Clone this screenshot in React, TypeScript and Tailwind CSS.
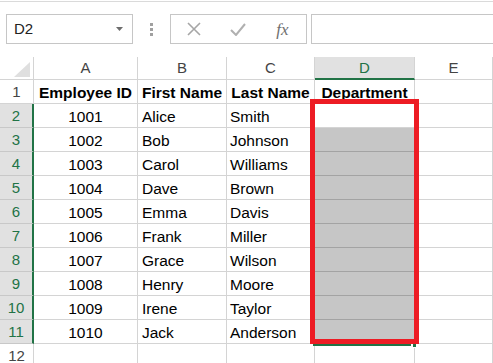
import React from "react";

const rows = [
  ["1001", "Alice", "Smith"],
  ["1002", "Bob", "Johnson"],
  ["1003", "Carol", "Williams"],
  ["1004", "Dave", "Brown"],
  ["1005", "Emma", "Davis"],
  ["1006", "Frank", "Miller"],
  ["1007", "Grace", "Wilson"],
  ["1008", "Henry", "Moore"],
  ["1009", "Irene", "Taylor"],
  ["1010", "Jack", "Anderson"],
];

const cell = "h-[24px] border-r border-b border-[#d4d4d4] flex items-center pt-[2px] overflow-hidden whitespace-nowrap";
const colHead = "h-[23px] border-r border-b border-[#d4d4d4] flex items-center justify-center text-[#444] text-[15px]";

const Toolbar: React.FC = () => (
  <div className="h-[56px] mt-px border-t border-[#dadada] flex items-start pt-[12px] pl-[6px]">
    {/* name box */}
    <div className="w-[127px] h-[30px] border border-[#c6c6c6] flex items-center justify-between pl-[7px] pr-[9px]">
      <span className="text-[15px] text-[#222] pt-px">D2</span>
      <svg width="7" height="4" viewBox="0 0 7 4">
        <path d="M0 0 H7 L3.5 4 Z" fill="#6d6d6d" />
      </svg>
    </div>
    <div className="w-[37px] h-[30px] flex flex-col items-center justify-center gap-[2px]">
      <span className="w-[3px] h-[3px] bg-[#a0a0a0]" />
      <span className="w-[3px] h-[3px] bg-[#a0a0a0]" />
      <span className="w-[3px] h-[3px] bg-[#a0a0a0]" />
    </div>
    {/* cancel / enter / fx */}
    <div className="w-[137px] h-[30px] border border-[#c6c6c6] flex items-center">
      <div className="w-[44px] flex justify-center pl-[2px]">
        <svg width="14" height="14" viewBox="0 0 14 14">
          <path d="M1 1 L13 13 M13 1 L1 13" stroke="#a6a6a6" strokeWidth="1.6" />
        </svg>
      </div>
      <div className="w-[46px] flex justify-center">
        <svg width="16" height="13" viewBox="0 0 16 13">
          <path d="M1 7 L6 12 L15 1" stroke="#b0b0b0" strokeWidth="2" fill="none" />
        </svg>
      </div>
      <div className="flex-1 flex justify-center pr-[2px]">
        <span className="font-['Liberation_Serif',serif] italic text-[17px] text-[#6f6f6f] leading-none">fx</span>
      </div>
    </div>
    <div className="flex-1 h-[30px] ml-[4px] border border-r-0 border-[#c6c6c6]" />
  </div>
);

export default function App() {
  return (
    <div className="w-[493px] h-[363px] overflow-hidden bg-white relative font-['Liberation_Sans',Arial,sans-serif] text-black">
      <Toolbar />
      <div className="grid grid-cols-[34px_104px_89px_88px_100px_1fr]">
        {/* header row */}
        <div className="h-[23px] border-r border-b border-[#d4d4d4] flex items-end justify-end pr-[3px] pb-[2px]">
          <svg width="16" height="15" viewBox="0 0 16 15">
            <path d="M16 0 L16 15 L0 15 Z" fill="#dfdfdf" />
          </svg>
        </div>
        <div className={colHead}>A</div>
        <div className={colHead}>B</div>
        <div className={colHead}>C</div>
        <div className="h-[23px] border-r border-[#d4d4d4] border-b-2 border-b-[#217346] bg-[#e1e1e1] flex items-center justify-center text-[#217346] text-[15px] pt-px">D</div>
        <div className={colHead}>E</div>

        {/* row 1 */}
        <div className={`${cell} justify-center text-[#444] text-[15px]`}>1</div>
        <div className={`${cell} justify-center font-bold text-[15.5px]`}>Employee ID</div>
        <div className={`${cell} justify-center font-bold text-[15.5px]`}>First Name</div>
        <div className={`${cell} justify-center font-bold text-[15.5px]`}>Last Name</div>
        <div className={`${cell} justify-center font-bold text-[15.5px]`}>Department</div>
        <div className={cell} />

        {rows.map(([id, first, last], i) => (
          <React.Fragment key={id}>
            <div className="h-[24px] border-b border-[#c8c8c8] border-r-2 border-r-[#217346] bg-[#e1e1e1] flex items-center justify-center pt-[2px] text-[#217346] text-[15px]">
              {i + 2}
            </div>
            <div className={`${cell} justify-center text-[15.5px]`}>{id}</div>
            <div className={`${cell} pl-[4px] text-[15.5px]`}>{first}</div>
            <div className={`${cell} pl-[3px] text-[15.5px]`}>{last}</div>
            <div
              className={
                i === 0
                  ? cell
                  : "h-[24px] border-r border-b border-r-[#d4d4d4] border-b-[#a3a3a3] bg-[#c6c6c6]"
              }
            />
            <div className={cell} />
          </React.Fragment>
        ))}

        {/* row 12 */}
        <div className={`${cell} justify-center text-[#444] text-[15px]`}>12</div>
        <div className={cell} />
        <div className={cell} />
        <div className={cell} />
        <div className={cell} />
        <div className={cell} />
      </div>

      {/* selection outline (green) and highlight box (red) */}
      <div className="absolute left-[313px] top-[344px] w-[98px] h-[2px] bg-[#217346]" />
      <div className="absolute left-[412px] top-[343px] w-[5px] h-[5px] bg-[#217346] border border-white" />
      <div className="absolute left-[310px] top-[99px] w-[109px] h-[245px] border-[5px] border-[#ed1c24]" />
    </div>
  );
}
